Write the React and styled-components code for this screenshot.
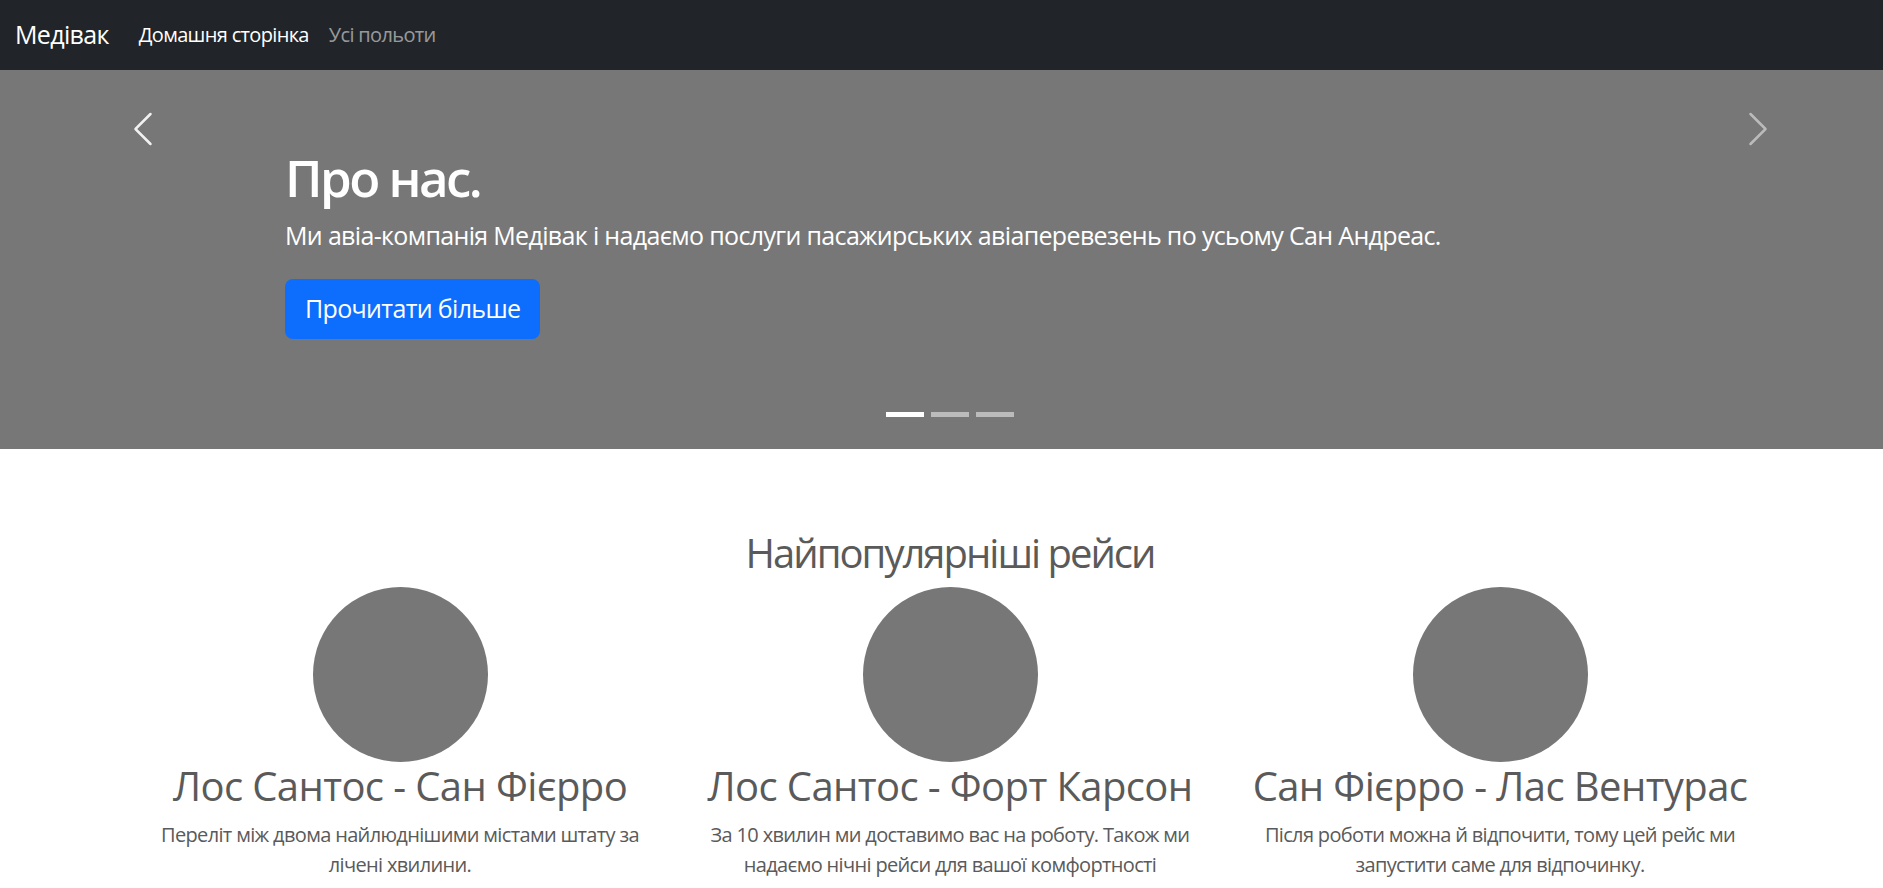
import React from 'react';
import styled, { createGlobalStyle } from 'styled-components';

const GlobalStyle = createGlobalStyle`
  *, *::before, *::after { box-sizing: border-box; }
  html, body {
    margin: 0;
    padding: 0;
    overflow: hidden;
    background: #fff;
  }
  body {
    font-family: 'Open Sans', 'Noto Sans', sans-serif;
    color: #5a5a5a;
    font-size: 20px;
    line-height: 1.5;
    letter-spacing: -0.033em;
  }
`;

const chevronLeft =
  'M11.354 1.646a.5.5 0 0 1 0 .708L5.707 8l5.647 5.646a.5.5 0 0 1-.708.708l-6-6a.5.5 0 0 1 0-.708l6-6a.5.5 0 0 1 .708 0z';
const chevronRight =
  'M4.646 1.646a.5.5 0 0 1 .708 0l6 6a.5.5 0 0 1 0 .708l-6 6a.5.5 0 0 1-.708-.708L10.293 8 4.646 2.354a.5.5 0 0 1 0-.708z';

const routes = [
  {
    title: 'Лос Сантос - Сан Фієрро',
    text: 'Переліт між двома найлюднішими містами штату за лічені хвилини.',
  },
  {
    title: 'Лос Сантос - Форт Карсон',
    text: 'За 10 хвилин ми доставимо вас на роботу. Також ми надаємо нічні рейси для вашої комфортності',
  },
  {
    title: 'Сан Фієрро - Лас Вентурас',
    text: 'Після роботи можна й відпочити, тому цей рейс ми запустити саме для відпочинку.',
  },
];

const App = () => (
  <Page>
    <GlobalStyle />
    <Navbar>
      <Brand href='#'>Медівак</Brand>
      <NavLink href='#' active>
        Домашня сторінка
      </NavLink>
      <NavLink href='#'>Усі польоти</NavLink>
    </Navbar>

    <Carousel>
      <Slide>
        <SlideTitle>Про нас.</SlideTitle>
        <Lead>
          Ми авіа-компанія Медівак і надаємо послуги пасажирських авіаперевезень по усьому Сан
          Андреас.
        </Lead>
        <PrimaryBtn href='#'>Прочитати більше</PrimaryBtn>
      </Slide>

      <Control side='left' bright>
        <svg width='40' height='40' viewBox='0 0 16 16' fill='#fff'>
          <path d={chevronLeft} />
        </svg>
      </Control>
      <Control side='right'>
        <svg width='40' height='40' viewBox='0 0 16 16' fill='#fff'>
          <path d={chevronRight} />
        </svg>
      </Control>

      <Indicators>
        <Indicator active />
        <Indicator />
        <Indicator />
      </Indicators>
    </Carousel>

    <Marketing>
      <SectionTitle>Найпопулярніші рейси</SectionTitle>
      <Row>
        {routes.map((r) => (
          <Col key={r.title}>
            <Circle />
            <ColTitle>{r.title}</ColTitle>
            <ColText>{r.text}</ColText>
          </Col>
        ))}
      </Row>
    </Marketing>
  </Page>
);

export default App;

const Page = styled.div`
  width: 1900px;
`;

const Navbar = styled.nav`
  height: 70px;
  background: #212529;
  display: flex;
  align-items: center;
  padding: 0 15px;
`;

const Brand = styled.a`
  font-size: 25px;
  line-height: 37.5px;
  color: #fff;
  margin-right: 20px;
  text-decoration: none;
`;

const NavLink = styled.a`
  font-size: 20px;
  line-height: 30px;
  padding: 0 10px;
  text-decoration: none;
  color: ${({ active }) => (active ? '#fff' : 'rgba(255, 255, 255, 0.55)')};
`;

const Carousel = styled.div`
  position: relative;
  height: 379px;
  background: #777;
  margin-bottom: 80px;
`;

const Slide = styled.div`
  height: 100%;
  display: flex;
  flex-direction: column;
  justify-content: flex-end;
  align-items: flex-start;
  padding: 0 15% 110px;
  color: #fff;
`;

const SlideTitle = styled.h1`
  margin: 0 0 10px;
  font-size: 51px;
  line-height: 60px;
  font-weight: 600;
  letter-spacing: -0.05em;
`;

const Lead = styled.p`
  margin: 0 0 25px;
  font-size: 25px;
  line-height: 37.5px;
  font-weight: 400;
`;

const PrimaryBtn = styled.a`
  display: inline-flex;
  align-items: center;
  height: 60px;
  padding: 0 20px;
  font-size: 25px;
  color: #fff;
  background: #0d6efd;
  border-radius: 8px;
  text-decoration: none;
`;

const Control = styled.button`
  position: absolute;
  top: 0;
  ${({ side }) => side}: 0;
  width: 15%;
  height: 118px;
  display: flex;
  align-items: center;
  justify-content: center;
  padding: 0;
  border: 0;
  background: none;
  opacity: ${({ bright }) => (bright ? 0.9 : 0.5)};
`;

const Indicators = styled.div`
  position: absolute;
  left: 0;
  right: 0;
  bottom: 32px;
  display: flex;
  justify-content: center;
  gap: 7.5px;
`;

const Indicator = styled.span`
  width: 37.5px;
  height: 5px;
  background: #fff;
  opacity: ${({ active }) => (active ? 1 : 0.5)};
`;

const Marketing = styled.section`
  width: 1650px;
  margin: 0 auto;
  text-align: center;
`;

const SectionTitle = styled.h2`
  margin: 0 0 10px;
  font-size: 40px;
  line-height: 48px;
  font-weight: 400;
  letter-spacing: -0.05em;
`;

const Row = styled.div`
  display: grid;
  grid-template-columns: repeat(3, 1fr);
`;

const Col = styled.div`
  padding: 0 15px;
`;

const Circle = styled.div`
  width: 175px;
  height: 175px;
  margin: 0 auto;
  border-radius: 50%;
  background: #777;
`;

const ColTitle = styled.h2`
  margin: 0 0 10px;
  font-size: 40px;
  line-height: 48px;
  font-weight: 400;
  letter-spacing: -0.015em;
`;

const ColText = styled.p`
  margin: 0 0 20px;
  font-size: 20px;
  line-height: 30px;
`;
